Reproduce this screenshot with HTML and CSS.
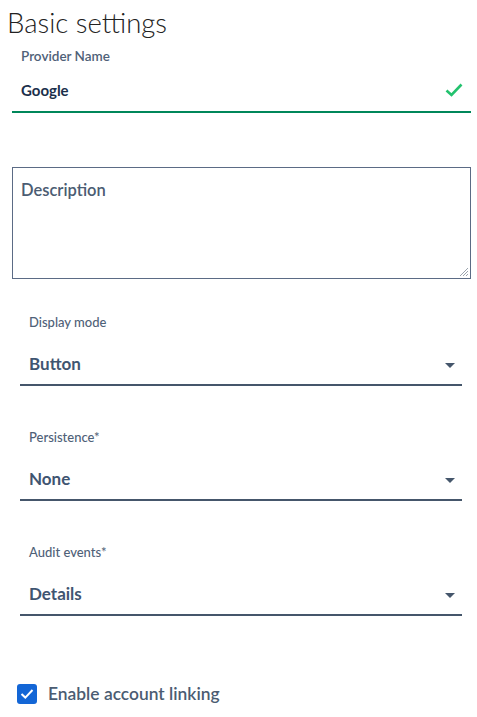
FILE: index.html
```html
<!DOCTYPE html>
<html>
<head>
<meta charset="utf-8">
<link rel="stylesheet" href="styles.css">
</head>
<body>
<h1 class="title">Basic settings</h1>

<div class="text-field">
  <div class="tf-label">Provider Name</div>
  <div class="tf-row">
    <span class="tf-value">Google</span>
    <svg class="tf-check" width="18" height="14" viewBox="0 0 18 14"><path d="M1.5 7.5 L6.5 12 L16.5 1.5" fill="none" stroke="#23c26e" stroke-width="2.6"/></svg>
  </div>
</div>

<div class="textarea">
  <span class="ta-label">Description</span>
  <svg class="grip" width="10" height="10" viewBox="0 0 10 10"><path d="M9 1 L1 9 M9 4 L4 9 M9 7 L7 9" stroke="#9aa3ad" stroke-width="1"/></svg>
</div>

<div class="select">
  <div class="sel-label">Display mode</div>
  <div class="sel-row"><span class="sel-value">Button</span><span class="caret"></span></div>
</div>
<div class="select">
  <div class="sel-label">Persistence*</div>
  <div class="sel-row"><span class="sel-value">None</span><span class="caret"></span></div>
</div>
<div class="select">
  <div class="sel-label">Audit events*</div>
  <div class="sel-row"><span class="sel-value">Details</span><span class="caret"></span></div>
</div>

<label class="checkbox">
  <span class="box"><svg width="14" height="12" viewBox="0 0 14 12"><path d="M1.5 6 L5.3 9.6 L12.5 2" fill="none" stroke="#fff" stroke-width="2"/></svg></span>
  <span class="cb-text">Enable account linking</span>
</label>
</body>
</html>
```

FILE: styles.css
```css
* { box-sizing: border-box; }
body {
  margin: 0;
  font-family: Lato, "Open Sans", sans-serif;
  background: #fff;
  color: #4b5d74;
}
.title {
  margin: 0;
  padding: 7px 0 0 7px;
  height: 42px;
  font-weight: 300;
  font-size: 27.5px;
  line-height: 32px;
  color: #222;
}
.text-field {
  margin: 0 6px 0 12px;
  padding: 6px 8px 0 9px;
  height: 71px;
  border-bottom: 2px solid #00875a;
}
.tf-label {
  font-size: 13.5px;
  font-weight: 600;
  line-height: 16px;
  color: #4f6178;
}
.tf-row {
  display: flex;
  align-items: center;
  justify-content: space-between;
  height: 42px;
  padding-top: 10px;
}
.tf-value {
  font-size: 15px;
  font-weight: 700;
  color: #1b2f4b;
}
.tf-check { display: block; }
.textarea {
  position: relative;
  margin: 54px 6px 0 12px;
  height: 112px;
  border: 1px solid #5b6b85;
  padding: 12px 8px;
}
.ta-label {
  font-size: 16.5px;
  font-weight: 600;
  color: #4b5c72;
}
.grip {
  position: absolute;
  right: 1px;
  bottom: 1px;
}
.select {
  margin: 0 15px 0 20px;
  padding: 34px 7px 0 9px;
  height: 107px;
  border-bottom: 2px solid #45566b;
}
.select + .select { margin-top: 8px; }
.sel-label {
  font-size: 13px;
  font-weight: 500;
  line-height: 18px;
  color: #4f6178;
}
.sel-row {
  display: flex;
  align-items: center;
  justify-content: space-between;
  margin-top: 20px;
  height: 24px;
}
.sel-value {
  font-size: 17px;
  font-weight: 700;
  color: #3f5571;
}
.caret {
  width: 0;
  height: 0;
  border-left: 5px solid transparent;
  border-right: 5px solid transparent;
  border-top: 5px solid #45566b;
  margin-top: 4px;
}
.checkbox {
  display: flex;
  align-items: center;
  gap: 11px;
  margin: 67px 0 0 17px;
}
.box {
  width: 20px;
  height: 20px;
  border-radius: 3px;
  background: #1366d6;
  display: flex;
  align-items: center;
  justify-content: center;
}
.cb-text {
  font-size: 17.4px;
  font-weight: 600;
  color: #4b5c72;
}
```
